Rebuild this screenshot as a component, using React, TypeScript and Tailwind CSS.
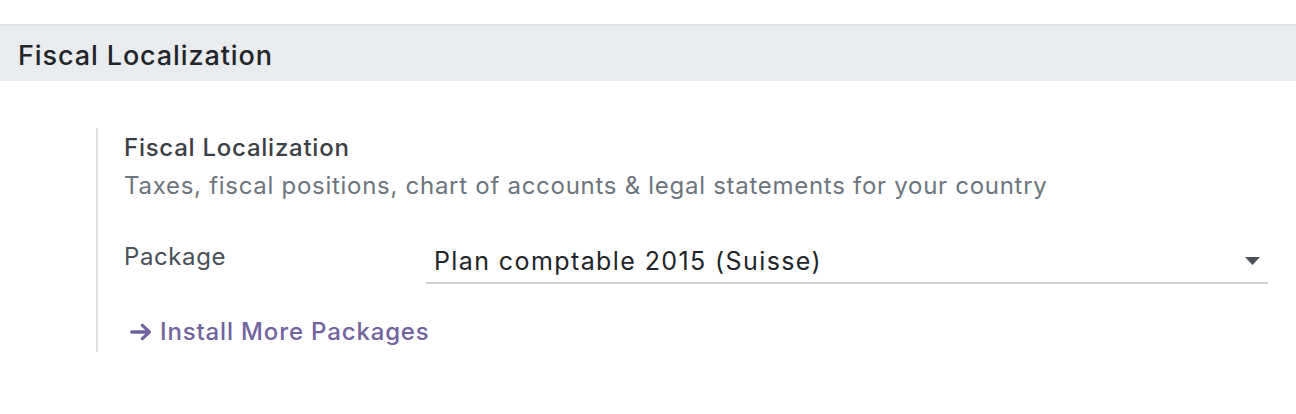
import React from "react";

export default function App() {
  return (
    <div className="w-[1296px] h-[414px] bg-white" style={{ fontFamily: "Inter, 'Noto Sans', sans-serif" }}>
      <div className="h-6" />
      <div className="h-[57px] bg-[#e9ecef] border-t-2 border-[#dee2e6] flex items-center px-[18px] pt-[3px]">
        <h2 className="text-[27px] font-medium text-[#212529] leading-none tracking-[0.9px]">Fiscal Localization</h2>
      </div>
      <div className="pl-[96px] pr-[28px] pt-[47px]">
        <div className="border-l-2 border-[#dee2e6] pl-[26px] pt-[5px] pb-[5px]">
          <div className="text-[24px] font-medium text-[#3b4046] leading-[30px] tracking-[0.75px]">Fiscal Localization</div>
          <div className="text-[24px] text-[#6c757d] leading-[30px] mt-[8px] tracking-[0.72px]">
            Taxes, fiscal positions, chart of accounts &amp; legal statements for your country
          </div>
          <div className="flex items-start mt-[39px]">
            <div className="w-[302px] pt-[2px] text-[24px] text-[#495057] leading-[30px] tracking-[0.6px]">Package</div>
            <div className="flex-1 border-b-2 border-[#cfcfcf] flex items-center justify-between pl-[8px] pr-[8px] h-[44px]">
              <span className="text-[25px] text-[#212529] leading-[30px] tracking-[1.4px]">Plan comptable 2015 (Suisse)</span>
              <svg width="15" height="8" viewBox="0 0 15 8"><path d="M0 0 H15 L7.5 8 Z" fill="#495057" /></svg>
            </div>
          </div>
          <div className="flex items-center gap-[9px] mt-[33px] pl-[6px] text-[#71639e]">
            <svg width="21" height="20" viewBox="0 0 21 20">
              <path
                d="M11.2 2.2 a1.6 1.6 0 0 1 2.3 0 l7 6.6 a1.6 1.6 0 0 1 0 2.4 l-7 6.6 a1.6 1.6 0 0 1 -2.3 -2.3 l4.2 -3.8 H1.8 a1.7 1.7 0 0 1 0 -3.4 H15.4 l-4.2 -3.8 a1.6 1.6 0 0 1 0 -2.3 Z"
                fill="#71639e"
              />
            </svg>
            <span className="text-[24px] font-medium leading-[30px] tracking-[0.85px]">Install More Packages</span>
          </div>
        </div>
      </div>
    </div>
  );
}
